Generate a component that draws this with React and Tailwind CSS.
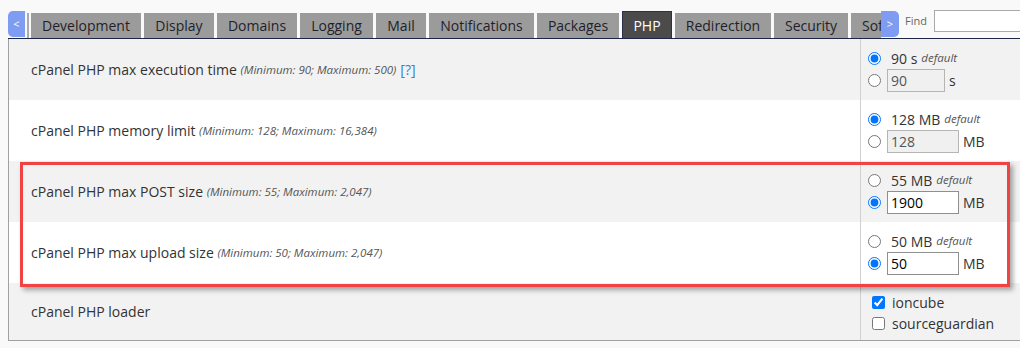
import React from "react"

const tabs = [
  ["Development", 110], ["Display", 70], ["Domains", 80], ["Logging", 73], ["Mail", 50],
  ["Notifications", 105], ["Packages", 82], ["PHP", 50, true], ["Redirection", 96],
  ["Security", 74], ["Software", 90],
]

function Radio({ on }) {
  return <input type="radio" readOnly checked={on} className="m-0 w-[13px] h-[13px] shrink-0" />
}

function Opt({ value, unit, def, on }) {
  return (
    <div className="flex flex-col">
      <div className="h-[22px] flex items-center">
        <Radio on={def} />
        <span className="ml-[10px] text-[14px] text-[#333]">{value} {unit}</span>
        <i className="ml-[4px] text-[11.5px] text-[#555]">default</i>
      </div>
      <div className="h-[23px] flex items-center">
        <Radio on={!def} />
        <input
          readOnly
          value={on}
          className={`ml-[6px] h-[23px] px-[3px] text-[14px] border outline-none ${unit === "s" ? "w-[58px]" : "w-[72px]"} ${def ? "bg-[#f0f0f0] text-[#555] border-[#b5b5b5]" : "bg-white text-black border-[#8f8f8f]"}`}
        />
        <span className="ml-[4px] text-[14px] text-[#333]">{unit}</span>
      </div>
    </div>
  )
}

function Row({ bg, h, label, note, help, children }) {
  return (
    <div className={`grid grid-cols-[851px_1fr] ${bg} ${h}`}>
      <div className="flex items-center pl-[22px] text-[14px] text-[#333]">
        <span>{label}&nbsp;</span>
        {note && <i className="text-[11.5px] text-[#555]">{note}</i>}
        {help && <a className="ml-[4px] text-[#3a7bd5]">[?]</a>}
      </div>
      <div className="border-l border-[#d0d0d0] pt-[8px] pl-[7px]">{children}</div>
    </div>
  )
}

export default function App() {
  return (
    <div className="w-[1020px] h-[348px] overflow-hidden bg-[#f9f9f9] pl-[8px] font-['Open_Sans',sans-serif]">
      <div className="flex items-start h-[39px] border-b border-[#1d2645] w-[1100px]">
        <div className="mt-[11px] w-[17px] h-[26px] rounded-l-[5px] bg-[#7d9cf2] text-white text-[11px] flex items-center justify-center">&lt;</div>
        <div className="ml-[2px] mt-[13px] w-[2px] h-[25px] bg-[#ababab]" />
        <div className="ml-[2px] w-[850px] h-[38px] overflow-hidden flex items-end gap-[3px]">
          {tabs.map(([t, w, active]) => (
            <div
              key={t}
              style={{ width: w }}
              className={`shrink-0 flex items-center text-[14px] ${t === "Software" ? "justify-start pl-[11px]" : "justify-center"} ${active ? "h-[27px] bg-[#4b4b4b] text-white border border-b-0 border-[#2b3047]" : "h-[25px] bg-[#9b9b9b] text-[#1f1f2a]"}`}
            >
              {t}
            </div>
          ))}
        </div>
        <div className="mt-[11px] w-[18px] h-[26px] rounded-r-[5px] bg-[#7d9cf2] text-white text-[11px] flex items-center justify-center">&gt;</div>
        <span className="ml-[6px] mt-[13px] text-[11px] text-[#666]">Find</span>
        <div className="ml-[7px] mt-[10px] w-[150px] h-[22px] bg-white border border-[#a9a9a9]" />
      </div>

      <div className="relative w-[1100px] border-l border-b border-[#a0a0a0]">
        <Row bg="bg-[#f2f2f2]" h="h-[61px]" label="cPanel PHP max execution time" note="(Minimum: 90; Maximum: 500)" help>
          <Opt value="90" unit="s" def on="90" />
        </Row>
        <Row bg="bg-white" h="h-[61px]" label="cPanel PHP memory limit" note="(Minimum: 128; Maximum: 16,384)">
          <Opt value="128" unit="MB" def on="128" />
        </Row>
        <Row bg="bg-[#f2f2f2]" h="h-[61px]" label="cPanel PHP max POST size" note="(Minimum: 55; Maximum: 2,047)">
          <Opt value="55" unit="MB" def={false} on="1900" />
        </Row>
        <Row bg="bg-white" h="h-[61px]" label="cPanel PHP max upload size" note="(Minimum: 50; Maximum: 2,047)">
          <Opt value="50" unit="MB" def={false} on="50" />
        </Row>
        <Row bg="bg-[#f2f2f2]" h="h-[57px]" label="cPanel PHP loader">
          <div className="pl-[4px] text-[14px] text-[#333]">
            <div className="h-[22px] flex items-center">
              <input type="checkbox" readOnly checked className="m-0 w-[13px] h-[13px]" />
              <span className="ml-[7px]">ioncube</span>
            </div>
            <div className="h-[20px] flex items-center">
              <input type="checkbox" readOnly checked={false} className="m-0 w-[13px] h-[13px]" />
              <span className="ml-[7px]">sourceguardian</span>
            </div>
          </div>
        </Row>

        <div className="absolute left-[11px] top-[123px] w-[990px] h-[125px] border-[3px] border-[#f04444] shadow-[3px_3px_5px_rgba(0,0,0,0.35)] pointer-events-none" />
      </div>
    </div>
  )
}
